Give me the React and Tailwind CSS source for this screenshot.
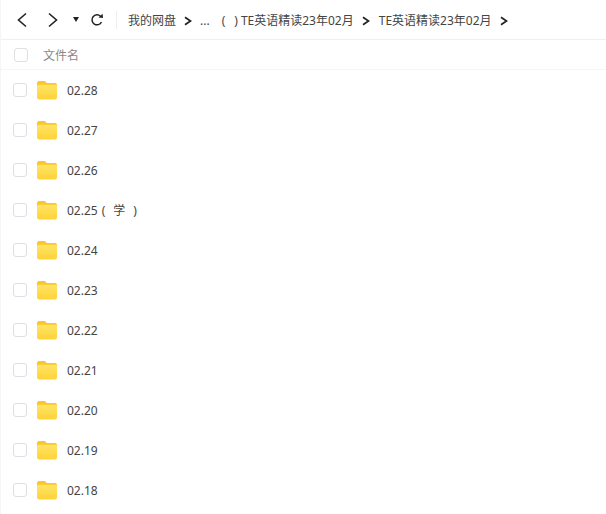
const FONT = "font-['Noto_Sans','Noto_Sans_CJK_SC',sans-serif]";

function Chevron({ className }) {
  return (
    <svg width="8" height="10" viewBox="0 0 8 10" fill="none" className={className}>
      <path d="M1 1.2 L6.5 5 L1 8.8" stroke="#222" strokeWidth="1.7" />
    </svg>
  );
}

function Folder() {
  return (
    <svg width="22" height="20" viewBox="0 0 22 20">
      <defs>
        <linearGradient id="fg" x1="0" y1="0" x2="0" y2="1">
          <stop offset="0" stopColor="#ffe566" />
          <stop offset="1" stopColor="#ffd23a" />
        </linearGradient>
      </defs>
      <path d="M1 3.5 C1 2.2 1.8 1 3 1 L8 1 C9 1 9.6 1.6 10.2 2.4 L10.8 3 L19 3 C20.2 3 21 3.8 21 5 L21 8 L1 8 Z" fill="#fcc52c" />
      <path d="M1 6.5 C1 5.4 1.8 4.8 3 4.8 L19 4.8 C20.2 4.8 21 5.4 21 6.5 L21 17.5 C21 18.6 20.2 19.4 19 19.4 L3 19.4 C1.8 19.4 1 18.6 1 17.5 Z" fill="url(#fg)" />
    </svg>
  );
}

function Box() {
  return <span className="block w-[14px] h-[14px] rounded-[3px] border border-[#dcdfe3] bg-white" />;
}

function Row({ name, suffix }) {
  return (
    <div className="flex items-center h-10 pl-[12px]">
      <Box />
      <span className="ml-[9px]"><Folder /></span>
      <span className="ml-[9px] pt-[2px] text-xs text-[#444] leading-none whitespace-pre flex items-center">
        <span>{name}</span>
        {suffix && (
          <>
            <span className="ml-[4px]">(</span>
            <span className="ml-[8px]">学</span>
            <span className="ml-[8px]">)</span>
          </>
        )}
      </span>
    </div>
  );
}

const rows = [
  { name: "02.28" },
  { name: "02.27" },
  { name: "02.26" },
  { name: "02.25", suffix: true },
  { name: "02.24" },
  { name: "02.23" },
  { name: "02.22" },
  { name: "02.21" },
  { name: "02.20" },
  { name: "02.19" },
  { name: "02.18" },
];

export default function App() {
  return (
    <div className={`w-[606px] h-[514px] overflow-hidden bg-white ${FONT} border-l border-[#f5f5f5]`}>
      <div className="flex items-center h-10 border-b border-[#f0f0f0] pl-[15px]">
        <svg width="12" height="16" viewBox="0 0 12 16" fill="none">
          <path d="M10 1.5 L2.5 8 L10 14.5" stroke="#222" strokeWidth="1.6" />
        </svg>
        <svg width="12" height="16" viewBox="0 0 12 16" fill="none" className="ml-[19px]">
          <path d="M2 1.5 L9.5 8 L2 14.5" stroke="#222" strokeWidth="1.6" />
        </svg>
        <svg width="6" height="5" viewBox="0 0 6 5" className="ml-[14px]">
          <path d="M0 0 H6 L3 5 Z" fill="#222" />
        </svg>
        <svg width="14" height="14" viewBox="0 0 14 14" fill="none" className="ml-[11px]">
          <path d="M11.5 9 A5 5 0 1 1 10.5 3.2" stroke="#222" strokeWidth="1.5" />
          <path d="M8.5 4.4 L13 5 L12.6 0.8 Z" fill="#222" />
        </svg>
        <span className="ml-[12px] w-px h-[18px] bg-[#eeeeee]" />
        <div className="flex items-center ml-[11px] pt-[2px] text-xs text-[#444] leading-none whitespace-pre">
          <span>我的网盘</span>
          <Chevron className="ml-[8px]" />
          <span className="ml-[8px]">...</span>
          <span className="ml-[12px]">(</span>
          <span className="ml-[9px]">)</span>
          <span className="ml-[3px]">TE英语精读23年02月</span>
          <Chevron className="ml-[8px]" />
          <span className="ml-[9px]">TE英语精读23年02月</span>
          <Chevron className="ml-[8px]" />
        </div>
      </div>
      <div className="flex items-center h-[30px] border-b border-[#f5f5f5] pl-[13px]">
        <Box />
        <span className="ml-[15px] pt-[2px] text-xs text-[#888] leading-none">文件名</span>
      </div>
      <div>
        {rows.map((r) => <Row key={r.name} name={r.name} suffix={r.suffix} />)}
      </div>
    </div>
  );
}
